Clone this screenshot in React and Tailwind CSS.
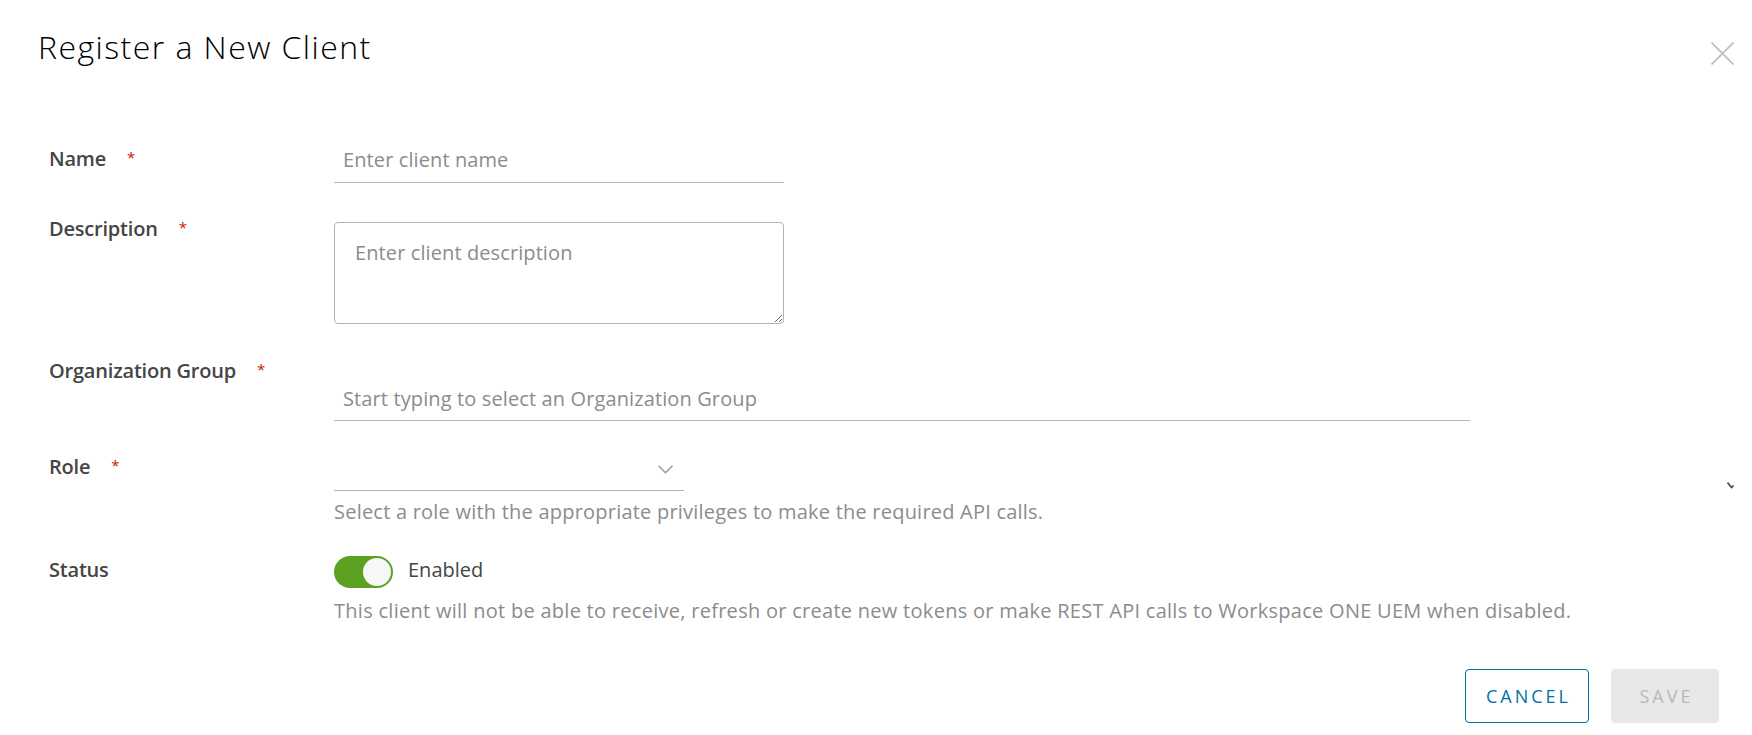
import React from "react";

function Req() {
  return (
    <span className="relative -top-[4px] ml-[21px] text-[15px] leading-none text-[#c92100]">*</span>
  );
}

function Label({ children, req }) {
  return (
    <div className="w-[285px] shrink-0 flex items-start">
      <span className="text-[20px] leading-[28px] font-semibold tracking-[-0.2px] text-[#454545]">{children}</span>
      {req && <span className="leading-[28px] flex items-start pt-[9px]"><Req /></span>}
    </div>
  );
}

export default function App() {
  return (
    <div className="w-full h-[735px] bg-white font-['Open_Sans','Liberation_Sans',sans-serif] overflow-hidden">
      {/* header */}
      <div className="flex items-start justify-between pl-[38px] pr-[18px] pt-[27px]">
        <h1 className="text-[32px] leading-[40px] font-light tracking-[1.45px] text-black">Register a New Client</h1>
        <button aria-label="Close" className="mt-[15px] w-[23px] h-[23px]">
          <svg width="23" height="23" viewBox="0 0 23 23" fill="none" stroke="#bdbdbd" strokeWidth="1.6">
            <path d="M0.5 0.5 L22.5 22.5 M22.5 0.5 L0.5 22.5" />
          </svg>
        </button>
      </div>

      {/* form */}
      <div className="flex flex-col pl-[49px] mt-[78px]">
        {/* Name */}
        <div className="flex items-start">
          <Label req>Name</Label>
          <input
            type="text"
            placeholder="Enter client name"
            className="w-[450px] h-[38px] pt-0 pb-[9px] pl-[9px] border-b border-[#b3b3b3] text-[20px] leading-[28px] tracking-[0.1px] text-[#454545] placeholder:text-[#8c8c8c] outline-none"
          />
        </div>

        {/* Description */}
        <div className="flex items-start mt-[32px]">
          <Label req>Description</Label>
          <textarea
            placeholder="Enter client description"
            className="mt-[7px] w-[450px] h-[102px] pt-[16px] pl-[20px] border border-[#b3b3b3] rounded-[4px] text-[20px] leading-[28px] tracking-[0.1px] text-[#454545] placeholder:text-[#8c8c8c] outline-none"
          />
        </div>

        {/* Organization Group */}
        <div className="flex items-start mt-[33px]">
          <Label req>Organization Group</Label>
          <input
            type="text"
            placeholder="Start typing to select an Organization Group"
            className="mt-[27px] w-[1136px] h-[37px] pt-0 pb-[8px] pl-[9px] border-b border-[#b3b3b3] text-[20px] leading-[28px] tracking-[0.12px] text-[#454545] placeholder:text-[#8c8c8c] outline-none"
          />
        </div>

        {/* Role */}
        <div className="flex items-start mt-[32px]">
          <Label req>Role</Label>
          <div className="flex flex-col">
            <div className="w-[350px] h-[38px] border-b border-[#b3b3b3] flex justify-end items-start pt-[12px] pr-[11px]">
              <svg width="15" height="9" viewBox="0 0 15 9" fill="none" stroke="#9a9a9a" strokeWidth="1.5">
                <path d="M0.5 0.8 L7.5 7.8 L14.5 0.8" />
              </svg>
            </div>
            <p className="mt-[7px] text-[20px] leading-[28px] tracking-[0.22px] text-[#8c8c8c]">
              Select a role with the appropriate privileges to make the required API calls.
            </p>
          </div>
          <div className="ml-auto mr-[18px] mt-[29px]">
            <svg width="7" height="7" viewBox="0 0 7 7" fill="none" stroke="#3c4a52" strokeWidth="1.6">
              <path d="M0.5 0.5 L4.5 5.5 L6.5 3.5" />
            </svg>
          </div>
        </div>

        {/* Status */}
        <div className="flex items-start mt-[30px]">
          <Label>Status</Label>
          <div className="flex flex-col">
            <div className="flex items-start">
              <button
                role="switch"
                aria-checked="true"
                className="w-[59px] h-[32px] rounded-full bg-[#5aa220] flex items-center justify-end pr-[2px]"
              >
                <span className="block w-[28px] h-[28px] rounded-full bg-[#f7f7f7]" />
              </button>
              <span className="ml-[15px] text-[20px] leading-[28px] text-[#454545]">Enabled</span>
            </div>
            <p className="mt-[9px] text-[20px] leading-[28px] tracking-[0.28px] text-[#8c8c8c]">
              This client will not be able to receive, refresh or create new tokens or make REST API calls to Workspace ONE UEM when disabled.
            </p>
          </div>
        </div>
      </div>

      {/* footer */}
      <div className="flex justify-end gap-[22px] pr-[33px] mt-[44px]">
        <button className="w-[124px] h-[54px] border border-[#0072a3] rounded-[4px] text-[#0072a3] text-[18px] font-medium tracking-[3px] pl-[3px]">
          CANCEL
        </button>
        <button className="w-[108px] h-[54px] rounded-[4px] bg-[#e8e8e8] text-[#b8b8b8] text-[18px] font-medium tracking-[3px] pl-[3px]">
          SAVE
        </button>
      </div>
    </div>
  );
}
